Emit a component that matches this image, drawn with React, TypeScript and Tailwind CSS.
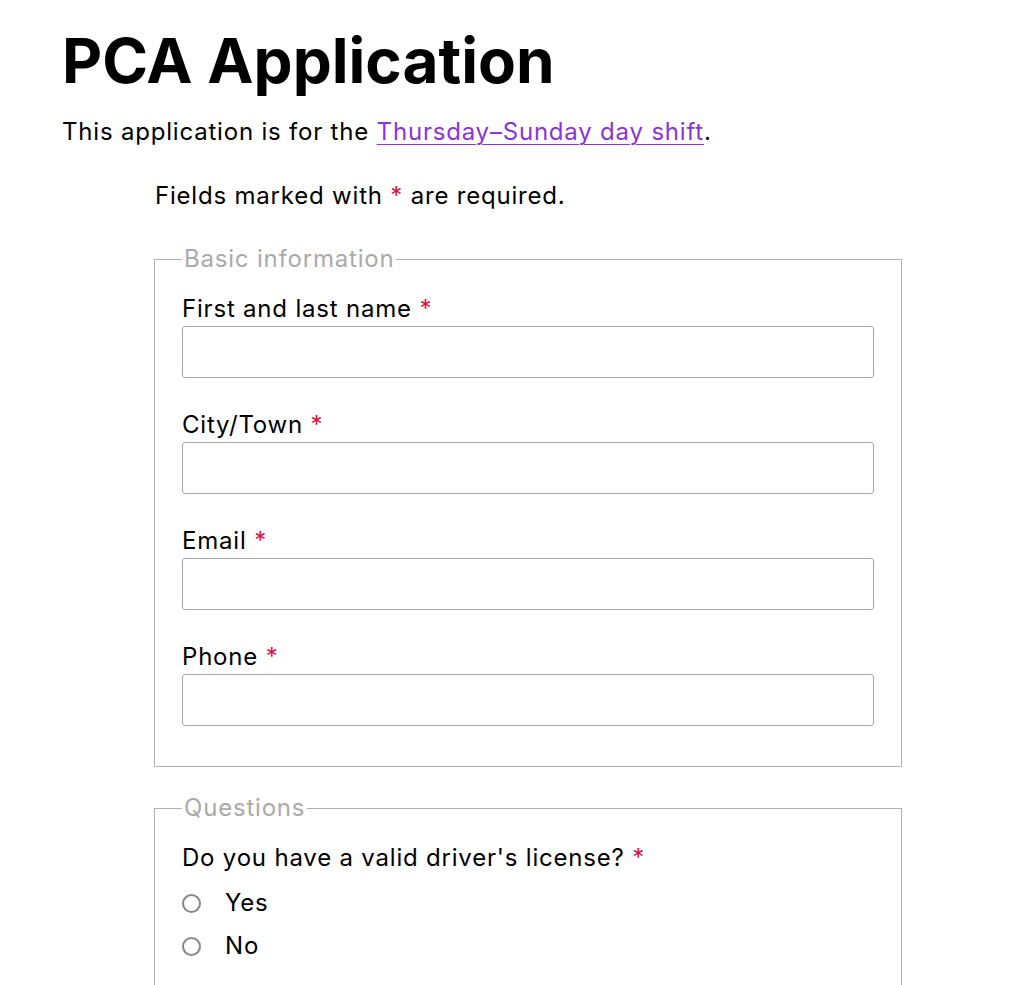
import React from "react";

function Req() {
  return <span className="text-[#e0103c]">*</span>;
}

function Field({ label }: { label: string }) {
  return (
    <div className="mb-[30px] last:mb-0">
      <label className="block pt-[2px] text-[24px] leading-[30px] tracking-[0.8px] text-black">
        {label} <Req />
      </label>
      <input
        type="text"
        className="mt-[2px] block h-[52px] w-full rounded-[3px] border border-[#a6a6a6] bg-white px-3 text-[24px] outline-none"
      />
    </div>
  );
}

function Radio({ label }: { label: string }) {
  return (
    <label className="flex h-[36px] items-center gap-[24px] text-[24px] tracking-[0.8px] text-black">
      <input
        type="radio"
        name="license"
        className="h-[19px] w-[19px] appearance-none rounded-full border-[2.5px] border-[#88878f] bg-white"
      />
      {label}
    </label>
  );
}

export default function App() {
  return (
    <div
      className="min-h-[985px] bg-white px-[62px] pt-[24px] text-black"
      style={{ fontFamily: "Inter, 'Noto Sans', sans-serif" }}
    >
      <h1 className="text-[62px] font-bold leading-[74px]">PCA Application</h1>
      <p className="mt-[16px] text-[24px] leading-[36px] tracking-[0.8px]">
        This application is for the{" "}
        <a href="#" className="text-[#8a34d8] underline decoration-1 underline-offset-[4px]">
          Thursday–Sunday day shift
        </a>
        .
      </p>
      <form className="ml-[92px] mt-[28px] w-[748px]">
        <p className="pl-[1px] text-[24px] leading-[36px] tracking-[0.8px]">
          Fields marked with <Req /> are required.
        </p>
        <fieldset className="mt-[27px] border border-[#b0b0b0] px-[27px] pb-[40px] pt-[15px]">
          <legend className="px-[2px] text-[24px] leading-[36px] tracking-[0.8px] text-[#aaaaaa]">Basic information</legend>
          <Field label="First and last name" />
          <Field label="City/Town" />
          <Field label="Email" />
          <Field label="Phone" />
        </fieldset>
        <fieldset className="mt-[23px] border border-[#b0b0b0] px-[27px] pb-[40px] pt-[17px]">
          <legend className="px-[2px] text-[24px] leading-[36px] tracking-[0.8px] text-[#aaaaaa]">Questions</legend>
          <div className="text-[24px] leading-[30px] tracking-[0.8px]">
            Do you have a valid driver's license? <Req />
          </div>
          <div className="mt-[12px] flex flex-col gap-[7px]">
            <Radio label="Yes" />
            <Radio label="No" />
          </div>
        </fieldset>
      </form>
    </div>
  );
}
